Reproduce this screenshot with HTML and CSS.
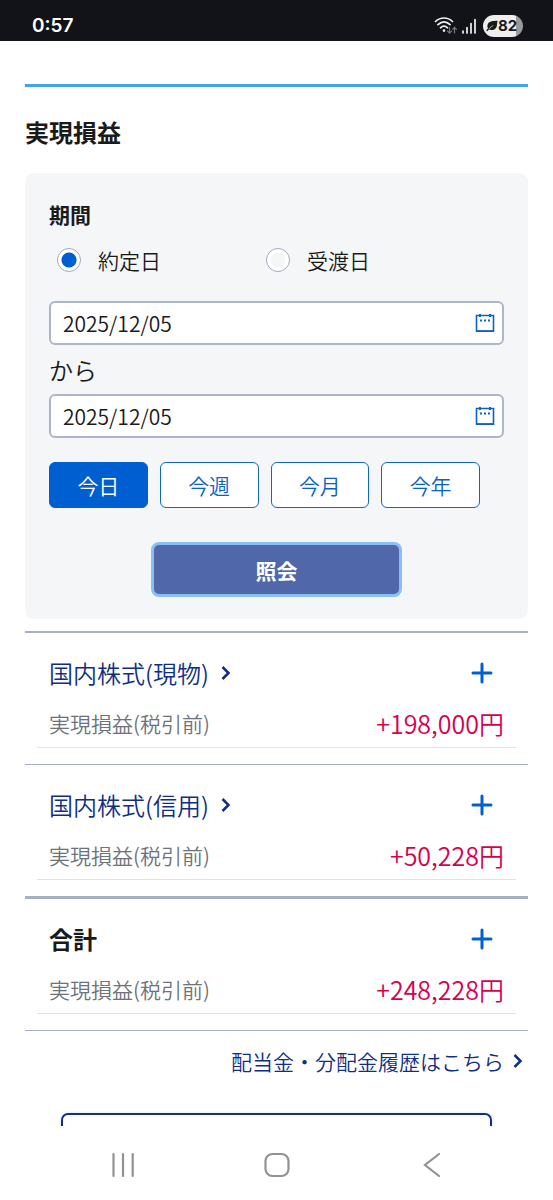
FILE: index.html
```html
<!DOCTYPE html>
<html lang="ja">
<head>
<meta charset="utf-8">
<meta name="viewport" content="width=device-width, initial-scale=1">
<title>実現損益</title>
<link rel="stylesheet" href="styles.css">
</head>
<body>
<header class="status">
  <span class="clock">0:57</span>
  <div class="indicators">
    <svg class="wifi" width="24" height="20" viewBox="0 0 24 20" fill="none" stroke-linecap="round">
      <g stroke="#f2f2f2" stroke-width="1.7">
        <path d="M1.500 5.500C6.500 .8 13.500 .8 18.500 5.500"/>
        <path d="M3.900 8.700C7.700 5.100 12.300 5.100 16.100 8.700"/>
        <path d="M6.500 11.800C8.700 9.800 11.300 9.800 13.500 11.800"/>
      </g>
      <circle cx="10" cy="14.600" r="1.300" fill="#f2f2f2"/>
      <path d="M15.500 11.500v5.500M13.500 15.200l2 2 2-2M20.500 17v-5.500M18.500 13.300l2-2 2 2" stroke="#77787c" stroke-width="1.200"/>
    </svg>
    <svg class="signal" width="16" height="18" viewBox="0 0 16 18" stroke="#f2f2f2" stroke-width="1.700" stroke-linecap="round">
      <path d="M2 14v2M6 10.500V16M10 6.500V16M14 2.500V16"/>
    </svg>
    <span class="battery">
      <svg width="12" height="12" viewBox="0 0 12 12"><path d="M11.700.8C7 .9 2.500 1 1.500 5c-.3 1.300 0 2.400.5 3.200L.2 10.500l1 .8 1.700-1.700c3 1.200 7 .2 7.900-3.400.4-1.700.2-3.500.9-5.400z" fill="#17181c"/><path d="M2.800 9C4.300 7.300 5.800 6.300 7.300 5.500" stroke="#eee" stroke-width=".7" fill="none"/></svg>82</span>
  </div>
</header>

<main class="page">
  <h1 class="page-title">実現損益</h1>

  <form class="search">
    <fieldset class="period">
      <legend class="period-title">期間</legend>
      <label class="choice"><input class="radio" type="radio" name="basis" checked>約定日</label>
      <label class="choice"><input class="radio" type="radio" name="basis">受渡日</label>
    </fieldset>
    <div class="date-field">
      <input class="date-input" type="text" value="2025/12/05" aria-label="開始日">
      <button class="calendar" type="button" aria-label="開始日を選択">
        <svg width="20" height="20" viewBox="0 0 20 20" fill="none" stroke="#0b62c9"><path d="M1.500 2.500h17v15.500h-17z" stroke-width="1.600"/><path d="M1 18.200h18" stroke-width="1.600"/><path d="M5 1v3M15 1v3" stroke-width="2"/><path d="M5 7.500h2M9 7.500h2M13 7.500h2" stroke-width="1.800"/></svg>
      </button>
    </div>
    <p class="from">から</p>
    <div class="date-field">
      <input class="date-input" type="text" value="2025/12/05" aria-label="終了日">
      <button class="calendar" type="button" aria-label="終了日を選択">
        <svg width="20" height="20" viewBox="0 0 20 20" fill="none" stroke="#0b62c9"><path d="M1.500 2.500h17v15.500h-17z" stroke-width="1.600"/><path d="M1 18.200h18" stroke-width="1.600"/><path d="M5 1v3M15 1v3" stroke-width="2"/><path d="M5 7.500h2M9 7.500h2M13 7.500h2" stroke-width="1.800"/></svg>
      </button>
    </div>
    <div class="presets">
      <button class="preset preset-on" type="button">今日</button>
      <button class="preset" type="button">今週</button>
      <button class="preset" type="button">今月</button>
      <button class="preset" type="button">今年</button>
    </div>
    <button class="submit" type="button">照会</button>
  </form>

  <section class="item">
    <div class="item-head">
      <h2 class="item-title"><a class="link" href="#spot">国内株式(現物)<svg class="chevron" width="10" height="16" viewBox="0 0 10 16"><path d="M1.500 2l6 6-6 6"/></svg></a></h2>
      <button class="expand" type="button" aria-label="詳細を開く"><svg width="22" height="22" viewBox="0 0 22 22"><path d="M11 2v18M2 11h18"/></svg></button>
    </div>
    <div class="item-row"><span class="label">実現損益(税引前)</span><span class="amount">+198,000円</span></div>
  </section>
  <section class="item item-thin">
    <div class="item-head">
      <h2 class="item-title"><a class="link" href="#margin">国内株式(信用)<svg class="chevron" width="10" height="16" viewBox="0 0 10 16"><path d="M1.500 2l6 6-6 6"/></svg></a></h2>
      <button class="expand" type="button" aria-label="詳細を開く"><svg width="22" height="22" viewBox="0 0 22 22"><path d="M11 2v18M2 11h18"/></svg></button>
    </div>
    <div class="item-row"><span class="label">実現損益(税引前)</span><span class="amount">+50,228円</span></div>
  </section>
  <section class="item item-total">
    <div class="item-head">
      <h2 class="item-title total-title">合計</h2>
      <button class="expand" type="button" aria-label="詳細を開く"><svg width="22" height="22" viewBox="0 0 22 22"><path d="M11 2v18M2 11h18"/></svg></button>
    </div>
    <div class="item-row"><span class="label">実現損益(税引前)</span><span class="amount">+248,228円</span></div>
  </section>
  <div class="history"><a class="link" href="#history">配当金・分配金履歴はこちら<svg class="chevron" width="10" height="16" viewBox="0 0 10 16"><path d="M1.500 2l6 6-6 6"/></svg></a></div>
  <button class="next-action" type="button" aria-label="次の操作"></button>
</main>

<nav class="system-nav">
  <button class="nav-button" type="button" aria-label="履歴"><svg width="26" height="26" viewBox="0 0 26 26"><path d="M3.500 2v22M13 2v22M22.700 2v22"/></svg></button>
  <button class="nav-button" type="button" aria-label="ホーム"><svg width="26" height="26" viewBox="0 0 26 26"><rect x="1.500" y="2" width="23" height="22" rx="7"/></svg></button>
  <button class="nav-button" type="button" aria-label="戻る"><svg width="26" height="26" viewBox="0 0 26 26"><path d="M20 2L6 13l14 11"/></svg></button>
</nav>
</body>
</html>
```

FILE: styles.css
```css
* { box-sizing: border-box; }

body {
  margin: 0;
  height: 100vh;
  display: flex;
  flex-direction: column;
  background: #fff;
  color: #1a1a1a;
  font: 350 21px/32px "Noto Sans CJK JP", sans-serif;
}

button, input { font: inherit; color: inherit; margin: 0; }
button { padding: 0; border: 0; background: none; }
svg { display: block; }

.status {
  flex: none;
  height: 41px;
  padding: 11px 30px 0 32px;
  display: flex;
  justify-content: space-between;
  background: #121318;
  color: #fff;
}
.clock { font: 600 19px/30px Inter, sans-serif; }
.indicators { display: flex; align-items: center; gap: 3px; }
.battery {
  display: flex;
  align-items: center;
  width: 40px;
  height: 22px;
  margin-left: 3px;
  padding-left: 3px;
  border-radius: 11px;
  background: linear-gradient(to right, #eee 82%, #999 82%);
  color: #17181c;
  font: 700 15px/22px Inter, sans-serif;
}

.page {
  flex: 1;
  min-height: 0;
  overflow: hidden;
  display: flex;
  flex-direction: column;
  padding: 43px 25px 0;
}
.page > * { flex: none; }
.page-title {
  margin: 0;
  padding: 27px 0 23px;
  border-top: 3px solid #46a3e6;
  font-size: 24px;
  line-height: 36px;
  font-weight: 700;
}

.search {
  padding: 25px 24px 22px;
  border-radius: 9px;
  background: #f4f6f8;
  display: flex;
  flex-direction: column;
  margin-bottom: 12px;
}
.period {
  margin: 0;
  padding: 0 0 0 8px;
  border: 0;
  display: grid;
  grid-template-columns: 209px 1fr;
}
.period-title { padding: 0; margin-left: -8px; font-weight: 700; }
.choice { display: flex; align-items: center; gap: 17px; padding-top: 14px; }
.radio {
  appearance: none;
  width: 24px;
  height: 24px;
  border: 1px solid #a0abc2;
  border-radius: 50%;
  background: radial-gradient(circle, #f4f6f8 7px, #fff 8px);
}
.radio:checked { background: radial-gradient(circle, #005fd0 7px, #fff 8px); }

.date-field {
  display: flex;
  align-items: center;
  height: 44px;
  padding-right: 7px;
  border: 2px solid #adb6c8;
  border-radius: 6px;
  background: #fff;
}
.period + .date-field { margin-top: 25px; }
.date-input {
  flex: 1;
  min-width: 0;
  height: 40px;
  padding: 0 0 0 12px;
  border: 0;
  background: none;
}
.from { margin: 0; padding: 9px 0 8px; font-size: 24px; }

.presets {
  display: grid;
  grid-template-columns: repeat(4, 1fr);
  gap: 12px;
  margin: 24px 24px 34px 0;
}
.preset {
  height: 46px;
  border: 1px solid #1266c6;
  border-radius: 6px;
  background: #fff;
  color: #0b62c4;
}
.preset-on { background: #005fd0; border-color: #005fd0; color: #fff; }
.submit {
  align-self: center;
  width: 55%;
  height: 55px;
  border: 3px solid #8abff5;
  border-radius: 8px;
  background: #5067a9;
  color: #fff;
  font-weight: 700;
}

.item { padding: 22px 12px 16px; border-top: 2px solid #a8b1c4; }
.item-thin { border-top-width: 1px; }
.item-total { border-top-width: 3px; }
.item-head {
  display: flex;
  justify-content: space-between;
  align-items: center;
  height: 36px;
  padding: 0 23px 0 12px;
}
.item-title { margin: 0; font-size: 24px; font-weight: inherit; }
.total-title { font-weight: 700; }
.link { display: flex; align-items: center; gap: 9px; color: #102f84; text-decoration: none; }
.item-title .link { gap: 12px; }
.chevron { fill: none; stroke: #102f84; stroke-width: 2.5; }
.expand svg { stroke: #0060ce; stroke-width: 3; stroke-linecap: round; }
.item-row {
  display: flex;
  justify-content: space-between;
  align-items: center;
  height: 57px;
  padding: 8px 12px 0;
  border-bottom: 1px solid #dde3e9;
}
.label { color: #6e727b; }
.amount { color: #d6004f; font-size: 25px; }

.history {
  display: flex;
  justify-content: flex-end;
  padding: 14px 5px 36px 0;
  border-top: 1px solid #a8b1c4;
}
.next-action {
  align-self: center;
  width: 431px;
  max-width: 86%;
  height: 56px;
  border: 2px solid #102f84;
  border-radius: 7px;
  box-shadow: 0 0 4px #dde1ea;
}

.system-nav {
  flex: none;
  display: flex;
  justify-content: space-around;
  align-items: center;
  height: 74px;
  padding: 4px 44px 0 46px;
  background: #fff;
}
.nav-button svg { fill: none; stroke: #929292; stroke-width: 2.2; stroke-linecap: round; }
```
